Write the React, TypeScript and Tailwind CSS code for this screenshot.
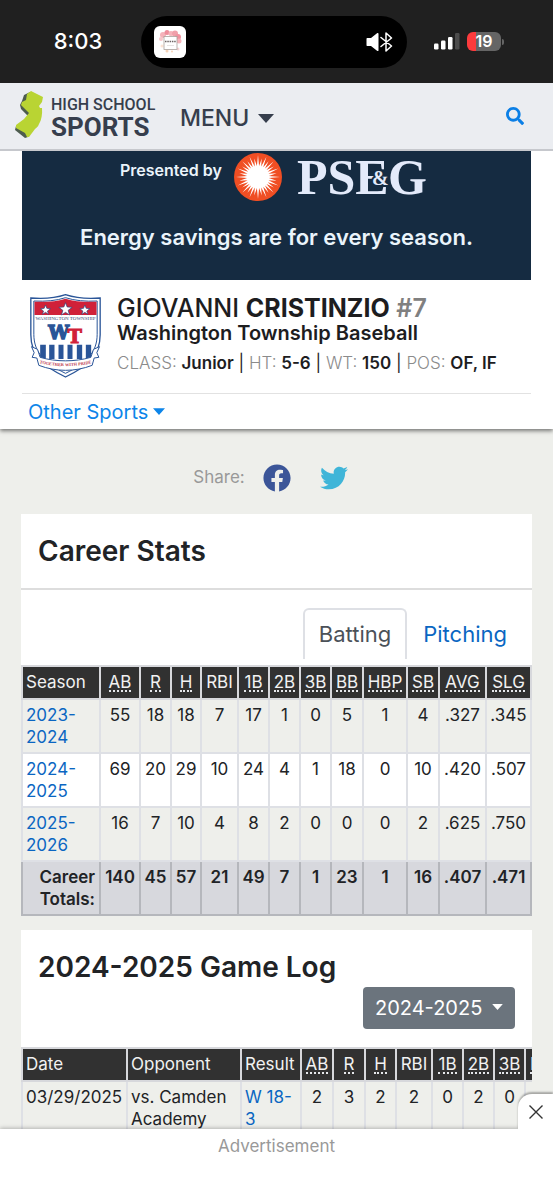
import { useState } from 'react';
import { FaFacebook, FaSearch, FaTwitter } from 'react-icons/fa';

const battingColumns = [
  { label: 'AB', abbr: true, width: 'w-[40px]' },
  { label: 'R', abbr: true, width: 'w-[31px]' },
  { label: 'H', abbr: true, width: 'w-[30px]' },
  { label: 'RBI', abbr: false, width: 'w-[37px]' },
  { label: '1B', abbr: true, width: 'w-[31px]' },
  { label: '2B', abbr: true, width: 'w-[31px]' },
  { label: '3B', abbr: true, width: 'w-[31px]' },
  { label: 'BB', abbr: true, width: 'w-[32px]' },
  { label: 'HBP', abbr: true, width: 'w-[44px]' },
  { label: 'SB', abbr: true, width: 'w-[32px]' },
  { label: 'AVG', abbr: true, width: 'w-[47px]' },
  { label: 'SLG', abbr: true, width: 'w-[45px]' },
];

const seasons = [
  { season: '2023-2024', stats: ['55', '18', '18', '7', '17', '1', '0', '5', '1', '4', '.327', '.345'] },
  { season: '2024-2025', stats: ['69', '20', '29', '10', '24', '4', '1', '18', '0', '10', '.420', '.507'] },
  { season: '2025-2026', stats: ['16', '7', '10', '4', '8', '2', '0', '0', '0', '2', '.625', '.750'] },
];

const totals = ['140', '45', '57', '21', '49', '7', '1', '23', '1', '16', '.407', '.471'];

const gameColumns = [
  { label: 'AB', abbr: true, width: 'w-[32px]' },
  { label: 'R', abbr: true, width: 'w-[32px]' },
  { label: 'H', abbr: true, width: 'w-[31px]' },
  { label: 'RBI', abbr: false, width: 'w-[36px]' },
  { label: '1B', abbr: true, width: 'w-[31px]' },
  { label: '2B', abbr: true, width: 'w-[31px]' },
  { label: '3B', abbr: true, width: 'w-[31px]' },
  { label: 'BB', abbr: true, width: 'w-[32px]' },
];

const games = [
  { date: '03/29/2025', opponent: 'vs. Camden Academy', result: 'W 18-3', stats: ['2', '3', '2', '2', '0', '2', '0', ''] },
];

function Caret({ className }: { className: string }) {
  return (
    <svg viewBox="0 0 16 9" className={className} fill="currentColor" aria-hidden="true">
      <path d="M0 0h16L8 9z" />
    </svg>
  );
}

function ColumnLabel({ label, abbr }: { label: string; abbr: boolean }) {
  if (!abbr) return <>{label}</>;
  return <abbr className="inline-block border-b-2 border-dotted border-gray-200 leading-[15px] no-underline">{label}</abbr>;
}

function StatusBar() {
  return (
    <div className="flex h-[83px] shrink-0 items-center bg-[#202020] text-white">
      <div className="w-[141px] shrink-0 pl-[15px] text-center text-[22px] font-medium">8:03</div>
      <div className="flex h-[52px] flex-1 items-center justify-between rounded-full bg-black pr-[14px] pl-[13px]">
        <svg viewBox="0 0 32 32" className="size-8" aria-hidden="true">
          <rect width="32" height="32" rx="6" fill="#fff" />
          <g fill="#f5b3ba">
            <circle cx="9" cy="9" r="3" />
            <circle cx="13" cy="6.500" r="2.500" fill="#ee8d9b" />
            <circle cx="17" cy="7.500" r="2.500" />
            <circle cx="21" cy="7.500" r="3" fill="#f0a0aa" />
            <circle cx="24" cy="11" r="3" fill="#f0929f" />
            <circle cx="25" cy="15" r="2.500" />
            <circle cx="7" cy="13" r="2" fill="#f7c6c9" />
            <circle cx="8" cy="20" r="1.500" fill="#fbe3d4" />
            <circle cx="13" cy="25" r="1.500" fill="#f6d3b8" />
            <circle cx="18" cy="25.500" r="1" fill="#f6d3b8" />
            <circle cx="24" cy="23" r="1.500" fill="#f8d5d5" />
          </g>
          <rect x="10" y="10.500" width="13" height="13" fill="#fff" stroke="#a9a09b" strokeWidth=".8" />
          <path d="M11 15.500h11" stroke="#6b6464" strokeWidth="1.500" strokeDasharray="1.500 .8" />
          <path d="M13 19.500h7" stroke="#d5d0ce" strokeWidth=".6" />
        </svg>
        <svg viewBox="0 0 27 20" className="h-5 w-[27px]" fill="none" aria-hidden="true">
          <path d="M1.500 6h3.500l6-4.800c.8-.6 1.500-.3 1.500.6v16.400c0 .9-.7 1.200-1.500.6L5 14H1.500C.7 14 .5 13.500.5 13V7c0-.6.300-1 1-1z" fill="#fff" />
          <path d="m15 5.500 10.500 8.500-5.500 5V1l5.500 5L15 14.500" stroke="#fff" strokeWidth="1.500" strokeLinejoin="round" strokeLinecap="round" />
        </svg>
      </div>
      <div className="flex w-[146px] shrink-0 items-center pl-[27px]">
        <svg viewBox="0 0 26 17" className="h-[17px] w-[26px]" aria-hidden="true">
          <rect x="0" y="10.500" width="4.500" height="6" rx="1.200" fill="#fff" />
          <rect x="7" y="7.500" width="4.500" height="9" rx="1.200" fill="#fff" />
          <rect x="14" y="4" width="4.500" height="12.500" rx="1.200" fill="#fff" />
          <rect x="21" y="0" width="4.500" height="16.500" rx="1.200" fill="#4d4d4d" />
        </svg>
        <div className="ml-[7px] h-[19px] w-[34px] rounded-md bg-linear-to-r from-[#fc3b3d] from-25% to-[#656565] to-25% text-center text-base leading-[19px] font-semibold">
          19
        </div>
        <div className="ml-px h-[6px] w-[2px] rounded-r bg-[#656565]" />
      </div>
    </div>
  );
}

function SiteHeader() {
  return (
    <header className="flex h-[68px] shrink-0 items-center border-b-2 border-[#c6c8cd] bg-[#ebedf1] pr-[29px] pl-[14px] text-[#363e4d]">
      <a href="#" className="shrink-0" aria-label="High School Sports">
        <svg viewBox="0 0 146 50" className="h-[50px] w-[146px] overflow-visible">
          <path d="M16 1 10 4l-2 6-2 4 1 4 7 7-4 5-8 5-1 4 10 8 3-1 1-4 5-4 5-8-1-25z" fill="#4d5c4e" />
          <path d="m17 0 12 6-1 5-3 4 1 2h2c.5 6-.5 12-3 16-1 3-3 4-4 5l-6 8h-2l-2-4-9-5v-3l8-6 5-6-8-8 1-3 4-2 1-6z" fill="#b9d433" />
          <g fill="currentColor" fontFamily="Roboto, 'Liberation Sans', sans-serif">
            <text x="37" y="19" fontSize="16" fontWeight="500">HIGH SCHOOL</text>
            <text x="37" y="45" fontSize="26" fontWeight="700">SPORTS</text>
          </g>
        </svg>
      </a>
      <button type="button" className="ml-5 flex items-center gap-[9px] pt-1 text-[23px] font-medium">
        MENU
        <Caret className="h-[9px] w-4" />
      </button>
      <button type="button" aria-label="Search" className="ml-auto text-[#0b7fe6]">
        <FaSearch className="size-[18px]" />
      </button>
    </header>
  );
}

const sunburst = Array.from({ length: 64 }, (_, i) => {
  const r = i % 2 ? 11 : i % 4 ? 19 : 22;
  const a = (i * Math.PI) / 32;
  return `${(24 + r * Math.cos(a)).toFixed(1)},${(24 + r * Math.sin(a)).toFixed(1)}`;
}).join(' ');

function SponsorBanner() {
  return (
    <a href="#" className="mx-[22px] block h-[129px] bg-[#152b41] text-center text-[#eaf4fb]">
      <div className="flex h-[52px] items-start justify-center pr-1">
        <span className="pt-[8px] text-base leading-[22px] font-semibold">Presented by</span>
        <svg viewBox="0 0 48 48" className="mt-[2px] ml-[12px] size-12" aria-hidden="true">
          <circle cx="24" cy="24" r="24" fill="#f04e23" />
          <polygon points={sunburst} fill="#fff" />
        </svg>
        <svg viewBox="0 0 132 46" className="ml-[15px] h-[46px] w-[132px] overflow-visible" fill="#e3eafa" fontFamily="'Liberation Serif', serif" fontWeight="700">
          <text x="0" y="43" fontSize="50">PSE</text>
          <text x="91" y="43" fontSize="50">G</text>
          <text x="75" y="34" fontSize="20" stroke="#152b41" strokeWidth="4" paintOrder="stroke">&amp;</text>
        </svg>
      </div>
      <div className="pt-[21px] text-[22px] leading-[26px] font-semibold">Energy savings are for every season.</div>
    </a>
  );
}

function SchoolCrest() {
  return (
    <svg viewBox="0 0 212 252" className="h-[84px] w-[71px] shrink-0" role="img" aria-label="Washington Township">
      <path d="M2 12c40 3 75 0 104-10 30 10 65 13 104 10v110c0 62-38 95-104 127C40 217 2 184 2 122z" fill="#fff" stroke="#2a5598" strokeWidth="4" />
      <path d="M11 21c36 2 68-1 95-10 28 9 60 12 95 10v100c0 56-35 88-95 117-60-29-95-61-95-117z" fill="#fff" stroke="#2a5598" strokeWidth="3" />
      <path d="M13 23c36 2 66-1 93-9 27 8 58 11 93 9v40H13z" fill="#d02139" />
      <g fill="#fff" stroke="#29457f" strokeWidth="2">
        <path d="m106 26 5 13 15 1-12 9 4 14-12-8-12 8 4-14-12-9 15-1z" />
        <path d="m46 33 4 10 11 1-9 7 3 10-9-6-9 6 3-10-9-7 11-1z" />
        <path d="m164 33 4 10 11 1-9 7 3 10-9-6-9 6 3-10-9-7 11-1z" />
      </g>
      <text x="106" y="79" textAnchor="middle" fontSize="15" fill="#344b76" fontFamily="'Liberation Serif', serif">WASHINGTON TOWNSHIP</text>
      <g fill="#2a5598">
        <path d="M30 152h17v42H30zM57 152h16v43H57zM85 152h15v43H85zM112 152h15v43h-15zM140 152h16v43h-16zM167 152h16v40h-16z" />
      </g>
      <g fontFamily="'DejaVu Serif', serif" fontWeight="700">
        <text x="54" y="135" fontSize="56" fill="#2a5598" stroke="#2a5598" strokeWidth="4">W</text>
        <text x="112" y="148" fontSize="58" fill="#d02139" stroke="#d02139" strokeWidth="3">T</text>
      </g>
      <path d="M4 158l18 8 8 24c48 14 104 14 152 0l8-24 18-8-8 18 6 14-14 2-6 22c-52 20-108 20-160 0l-6-22-14-2 6-14z" fill="#fff" stroke="#2a5598" strokeWidth="3" />
      <path id="motto" d="M22 206c54 14 114 14 168 0" fill="none" />
      <text fontSize="13" fill="#b93449" fontWeight="700" textAnchor="middle" fontFamily="'Liberation Serif', serif">
        <textPath href="#motto" startOffset="50%">TOGETHER WITH PRIDE</textPath>
      </text>
    </svg>
  );
}

function PlayerProfile() {
  return (
    <section className="relative bg-white shadow-[0_2px_4px_rgba(0,0,0,0.5)]">
      <SponsorBanner />
      <div className="mx-[22px] flex h-[114px] gap-4 border-b border-[#e2e2e2] pt-[14px] pl-2">
        <SchoolCrest />
        <div className="whitespace-nowrap text-[#1d1d1f]">
          <h1 className="text-[25px] leading-[28px] font-medium">
            GIOVANNI <span className="font-bold">CRISTINZIO</span> <span className="font-semibold text-[#808080]">#7</span>
          </h1>
          <h2 className="text-xl leading-[22px] font-semibold">Washington Township Baseball</h2>
          <p className="mt-2 text-[17px] leading-[22px]">
            <span className="font-light text-[#8b8b8b]">CLASS:</span> <b className="font-semibold">Junior</b> |{' '}
            <span className="font-light text-[#8b8b8b]">HT:</span> <b className="font-semibold">5-6</b> |{' '}
            <span className="font-light text-[#8b8b8b]">WT:</span> <b className="font-semibold">150</b> |{' '}
            <span className="font-light text-[#8b8b8b]">POS:</span> <b className="font-semibold">OF, IF</b>
          </p>
        </div>
      </div>
      <button type="button" className="ml-7 flex h-[35px] items-center gap-[5px] text-xl text-[#0d85e9]">
        Other Sports
        <Caret className="h-[7px] w-3" />
      </button>
    </section>
  );
}

const headCell = 'border-2 border-[#d7d8dc] py-[3px] font-normal leading-[25px] text-[#f2f2f2]';
const bodyCell = 'border-2 border-[#dee0e5] py-1 align-top leading-[22px]';
const footCell = 'border-2 border-t-0 border-[#b5b7bc] py-1 align-top leading-[22px]';

function CareerStats() {
  const [tab, setTab] = useState('Batting');

  return (
    <section className="mt-[22px] bg-white">
      <h2 className="border-b-2 border-[#dddddd] px-[17px] pt-[21px] pb-[21px] text-[28px] leading-[32px] font-semibold">Career Stats</h2>
      <div role="tablist" className="flex justify-end pt-[18px] pr-[9px] text-[22px]">
        {['Batting', 'Pitching'].map((name) => (
          <button
            key={name}
            type="button"
            role="tab"
            aria-selected={tab === name}
            onClick={() => setTab(name)}
            className={`h-[51px] rounded-t-md border-2 border-b-0 px-[14px] ${
              tab === name ? 'border-[#dee0e5] text-[#4b5158]' : 'border-transparent text-[#0a66c2]'
            }`}
          >
            {name}
          </button>
        ))}
      </div>
      <table className="mt-[6px] w-full table-fixed border-collapse text-center text-[17px]">
        <colgroup>
          <col className="w-[78px]" />
          {battingColumns.map((col) => (
            <col key={col.label} className={col.width} />
          ))}
        </colgroup>
        <thead className="bg-[#313131]">
          <tr>
            <th className={`${headCell} pl-[3px] text-left`}>Season</th>
            {battingColumns.map((col) => (
              <th key={col.label} className={headCell}>
                <ColumnLabel label={col.label} abbr={col.abbr} />
              </th>
            ))}
          </tr>
        </thead>
        <tbody>
          {seasons.map((row) => (
            <tr key={row.season} className="odd:bg-[#eeefeb]">
              <td className={`${bodyCell} pl-[3px] text-left`}>
                <a href="#" className="text-[#0a66c2]">{row.season}</a>
              </td>
              {row.stats.map((stat, i) => (
                <td key={i} className={bodyCell}>{stat}</td>
              ))}
            </tr>
          ))}
        </tbody>
        <tfoot className="bg-[#d7d8dd] font-semibold">
          <tr>
            <th className={`${footCell} pr-1 text-right font-semibold`}>Career Totals:</th>
            {totals.map((total, i) => (
              <td key={i} className={footCell}>{total}</td>
            ))}
          </tr>
        </tfoot>
      </table>
    </section>
  );
}

function GameLog() {
  return (
    <section className="mt-[14px] bg-white">
      <h2 className="px-[17px] pt-[21px] text-[28px] leading-[32px] font-semibold">2024-2025 Game Log</h2>
      <div className="flex justify-end pt-1 pr-[17px] pb-[18px]">
        <div className="relative w-[152px] text-white">
          <select
            aria-label="Season"
            defaultValue="2024-2025"
            className="h-[42px] w-full appearance-none rounded bg-[#6b747d] pl-3 text-xl"
          >
            <option>2023-2024</option>
            <option>2024-2025</option>
            <option>2025-2026</option>
          </select>
          <Caret className="pointer-events-none absolute top-[17px] right-3 h-[6px] w-[11px]" />
        </div>
      </div>
      <div className="overflow-hidden">
        <table className="w-[536px] table-fixed border-collapse text-center text-[17px]">
          <colgroup>
            <col className="w-[105px]" />
            <col className="w-[114px]" />
            <col className="w-[60px]" />
            {gameColumns.map((col) => (
              <col key={col.label} className={col.width} />
            ))}
          </colgroup>
          <thead className="bg-[#313131]">
            <tr>
              <th className={`${headCell} pl-[3px] text-left`}>Date</th>
              <th className={`${headCell} pl-[3px] text-left`}>Opponent</th>
              <th className={`${headCell} pl-[3px] text-left`}>Result</th>
              {gameColumns.map((col) => (
                <th key={col.label} className={headCell}>
                  <ColumnLabel label={col.label} abbr={col.abbr} />
                </th>
              ))}
            </tr>
          </thead>
          <tbody>
            {games.map((game) => (
              <tr key={game.date} className="odd:bg-[#eeefeb]">
                <td className={`${bodyCell} pl-[3px] text-left`}>{game.date}</td>
                <td className={`${bodyCell} pl-[3px] text-left`}>{game.opponent}</td>
                <td className={`${bodyCell} pl-[3px] text-left`}>
                  <a href="#" className="text-[#0a66c2]">{game.result}</a>
                </td>
                {game.stats.map((stat, i) => (
                  <td key={i} className={bodyCell}>{stat}</td>
                ))}
              </tr>
            ))}
          </tbody>
        </table>
      </div>
    </section>
  );
}

function AdBar() {
  return (
    <aside className="relative h-[71px] shrink-0 bg-white pt-[5px] text-center text-[17px] leading-[24px] text-[#999999] shadow-[0_-1px_4px_rgba(0,0,0,0.25)]">
      Advertisement
      <button
        type="button"
        aria-label="Close advertisement"
        className="absolute -top-[35px] right-0 flex h-[36px] w-[35px] items-center justify-center rounded-tl-[14px] bg-white text-[#333333] shadow-[0_-2px_2px_rgba(0,0,0,0.3)]"
      >
        <svg viewBox="0 0 14 14" className="size-[14px]" stroke="currentColor" strokeWidth="1.400" aria-hidden="true">
          <path d="m.5.5 13 13m0-13-13 13" />
        </svg>
      </button>
    </aside>
  );
}

export default function App() {
  return (
    <div className="flex h-screen flex-col bg-[#eeefeb] font-['Inter',sans-serif] text-[#212326]">
      <StatusBar />
      <SiteHeader />
      <main className="min-h-0 flex-1 overflow-hidden">
        <PlayerProfile />
        <div className="px-[21px]">
          <div className="mt-[35px] flex items-center justify-center pr-3 text-[17px] text-[#999999]">
            Share:
            <a href="#" aria-label="Share on Facebook" className="ml-[18px] text-[#3b5598]">
              <FaFacebook className="size-7" />
            </a>
            <a href="#" aria-label="Share on Twitter" className="ml-[29px] text-[#3fb5d8]">
              <FaTwitter className="size-7" />
            </a>
          </div>
          <CareerStats />
          <GameLog />
        </div>
      </main>
      <AdBar />
    </div>
  );
}
